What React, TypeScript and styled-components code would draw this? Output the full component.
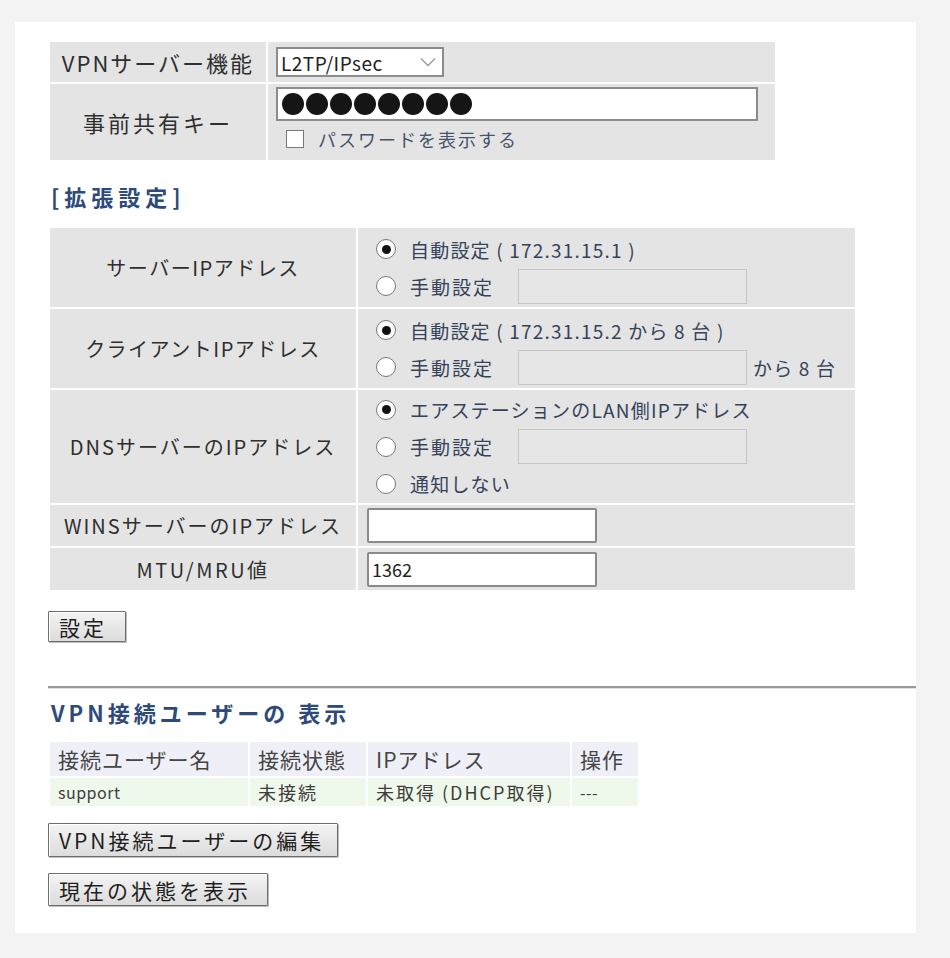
import React from "react";
import styled, { createGlobalStyle } from "styled-components";

const Global = createGlobalStyle`
  html, body { margin: 0; padding: 0; background: #f3f3f3; }
  body { font-family: "Noto Sans CJK JP", "Noto Sans", sans-serif; color: #333; }
  * { box-sizing: border-box; }
`;

const Panel = styled.div`
  margin: 22px 0 25px 15px;
  width: 901px;
  background: #fff;
  padding: 18px 0 27px 33px;
  display: flex;
  flex-direction: column;
  align-items: flex-start;
`;

const FormTable = styled.table<{ $w: number; $mt?: number }>`
  border-collapse: separate;
  border-spacing: 2px;
  table-layout: fixed;
  width: ${(p) => p.$w}px;
  margin-top: ${(p) => p.$mt ?? 0}px;
`;

const Col = styled.col<{ $w: number }>`
  width: ${(p) => p.$w}px;
`;

const LabelCell = styled.td<{ $h: number; $size?: number; $ls?: number }>`
  height: ${(p) => p.$h}px;
  padding: 0;
  background: #e4e4e4;
  text-align: center;
  vertical-align: middle;
  font-size: ${(p) => p.$size ?? 20}px;
  font-weight: 400;
  letter-spacing: ${(p) => p.$ls ?? 1.5}px;
  color: #2f2f2f;
  white-space: nowrap;
`;

const ValueCell = styled.td<{ $h: number; $pl?: number }>`
  height: ${(p) => p.$h}px;
  padding: 0 0 0 ${(p) => p.$pl ?? 8}px;
  background: #e4e4e4;
  vertical-align: middle;
`;

const Stack = styled.div<{ $gap?: number }>`
  display: flex;
  flex-direction: column;
  gap: ${(p) => p.$gap ?? 0}px;
`;

const SelectBox = styled.div`
  width: 168px;
  height: 30px;
  background: #fff;
  border: 2px solid #8c8c8c;
  display: flex;
  align-items: center;
  justify-content: space-between;
  padding: 0 6px 0 3px;
  font-size: 19px;
  letter-spacing: 0.5px;
  color: #222;
`;

const PasswordBox = styled.div`
  width: 482px;
  height: 34px;
  background: #fff;
  border: 2px solid #8c8c8c;
  display: flex;
  align-items: center;
  gap: 2px;
  padding-left: 4px;
`;

const Dot = styled.span`
  width: 22px;
  height: 22px;
  border-radius: 50%;
  background: #151515;
`;

const CheckLine = styled.label`
  display: flex;
  align-items: center;
  gap: 14px;
  height: 36px;
  padding-left: 10px;
  font-size: 18px;
  letter-spacing: 2px;
  color: #44536a;
`;

const CheckBox = styled.span`
  width: 18px;
  height: 18px;
  background: #fff;
  border: 1px solid #777;
`;

const Heading = styled.h2<{ $mt: number; $ls?: number }>`
  margin: ${(p) => p.$mt}px 0 0 3px;
  font-size: 22px;
  line-height: 26px;
  font-weight: 700;
  letter-spacing: ${(p) => p.$ls ?? 4}px;
  color: #2d4a7a;
`;

const OptionLine = styled.div`
  display: flex;
  align-items: center;
  height: 37px;
  font-size: 19px;
  font-weight: 400;
  letter-spacing: 1.2px;
  color: #35435a;
  white-space: nowrap;
`;

const Radio = styled.span<{ $on?: boolean }>`
  width: 20px;
  height: 20px;
  border-radius: 50%;
  border: 1px solid #7a7a7a;
  background: radial-gradient(circle, #fff 60%, #eee 100%);
  margin-right: 14px;
  display: flex;
  align-items: center;
  justify-content: center;
  &::after {
    content: "";
    width: 9px;
    height: 9px;
    border-radius: 50%;
    background: ${(p) => (p.$on ? "#111" : "transparent")};
  }
`;

const OptionText = styled.span<{ $w?: number }>`
  display: inline-block;
  width: ${(p) => (p.$w ? `${p.$w}px` : "auto")};
  letter-spacing: 2px;
`;

const DisabledInput = styled.div`
  width: 229px;
  height: 35px;
  background: #e6e6e6;
  border: 1px solid #c6c6c6;
`;

const TextInput = styled.div`
  width: 230px;
  height: 35px;
  background: #fff;
  border: 2px solid #8a8a8a;
  border-radius: 2px;
  font-size: 18px;
  color: #222;
  display: flex;
  align-items: center;
  padding-left: 3px;
`;

const Suffix = styled.span`
  margin-left: 6px;
`;

const Button = styled.button<{ $w: number; $h: number; $mt: number }>`
  width: ${(p) => p.$w}px;
  height: ${(p) => p.$h}px;
  margin-top: ${(p) => p.$mt}px;
  padding: 0 0 0 10px;
  text-align: left;
  font-family: "Noto Sans CJK JP", "Noto Sans", sans-serif;
  font-size: 21px;
  font-weight: 400;
  letter-spacing: 3px;
  color: #1f1f1f;
  background: linear-gradient(#f4f4f4, #dcdcdc);
  border: 1px solid #6e6e6e;
  box-shadow: inset 1px 1px 0 #fff, 1px 1px 0 #bdbdbd;
  border-radius: 1px;
`;

const Rule = styled.hr`
  align-self: stretch;
  margin: 44px 0 0 0;
  border: 0;
  border-top: 2px solid #9a9a9a;
  border-bottom: 1px solid #e2e2e2;
`;

const HeadCell = styled.td`
  height: 34px;
  padding: 0 0 0 8px;
  background: #eff0f7;
  font-size: 21px;
  letter-spacing: 1px;
  color: #454545;
  white-space: nowrap;
  vertical-align: middle;
`;

const DataCell = styled.td<{ $latin?: boolean }>`
  height: 28px;
  padding: 0 0 0 8px;
  background: #eef8eb;
  font-size: ${(p) => (p.$latin ? 16 : 18)}px;
  letter-spacing: ${(p) => (p.$latin ? 0.5 : 2)}px;
  color: #3d3d3d;
  white-space: nowrap;
  vertical-align: middle;
`;

const Chevron = () => (
  <svg width="16" height="10" viewBox="0 0 16 10" fill="none">
    <path d="M1 1.5 L8 8.5 L15 1.5" stroke="#9a9a9a" strokeWidth="1.3" />
  </svg>
);

export default function App() {
  return (
    <>
      <Global />
      <Panel>
        <FormTable $w={729}>
          <colgroup>
            <Col $w={216} />
            <Col $w={507} />
          </colgroup>
          <tbody>
            <tr>
              <LabelCell $h={40} $size={22} $ls={2}>VPNサーバー機能</LabelCell>
              <ValueCell $h={40}>
                <SelectBox>
                  <span>L2TP/IPsec</span>
                  <Chevron />
                </SelectBox>
              </ValueCell>
            </tr>
            <tr>
              <LabelCell $h={76} $size={22} $ls={3}>事前共有キー</LabelCell>
              <ValueCell $h={76}>
                <Stack>
                  <PasswordBox>
                    {Array.from({ length: 8 }).map((_, i) => (
                      <Dot key={i} />
                    ))}
                  </PasswordBox>
                  <CheckLine>
                    <CheckBox />
                    パスワードを表示する
                  </CheckLine>
                </Stack>
              </ValueCell>
            </tr>
          </tbody>
        </FormTable>

        <Heading $mt={21} $ls={5}>[拡張設定]</Heading>

        <FormTable $w={809} $mt={17}>
          <colgroup>
            <Col $w={306} />
            <Col $w={497} />
          </colgroup>
          <tbody>
            <tr>
              <LabelCell $h={79}>サーバーIPアドレス</LabelCell>
              <ValueCell $h={79} $pl={18}>
                <Stack>
                  <OptionLine>
                    <Radio $on />
                    自動設定 ( 172.31.15.1 )
                  </OptionLine>
                  <OptionLine>
                    <Radio />
                    <OptionText $w={108}>手動設定</OptionText>
                    <DisabledInput />
                  </OptionLine>
                </Stack>
              </ValueCell>
            </tr>
            <tr>
              <LabelCell $h={79}>クライアントIPアドレス</LabelCell>
              <ValueCell $h={79} $pl={18}>
                <Stack>
                  <OptionLine>
                    <Radio $on />
                    自動設定 ( 172.31.15.2 から 8 台 )
                  </OptionLine>
                  <OptionLine>
                    <Radio />
                    <OptionText $w={108}>手動設定</OptionText>
                    <DisabledInput />
                    <Suffix>から 8 台</Suffix>
                  </OptionLine>
                </Stack>
              </ValueCell>
            </tr>
            <tr>
              <LabelCell $h={113} $ls={2}>DNSサーバーのIPアドレス</LabelCell>
              <ValueCell $h={113} $pl={18}>
                <Stack>
                  <OptionLine>
                    <Radio $on />
                    エアステーションのLAN側IPアドレス
                  </OptionLine>
                  <OptionLine>
                    <Radio />
                    <OptionText $w={108}>手動設定</OptionText>
                    <DisabledInput />
                  </OptionLine>
                  <OptionLine>
                    <Radio />
                    通知しない
                  </OptionLine>
                </Stack>
              </ValueCell>
            </tr>
            <tr>
              <LabelCell $h={41} $ls={2}>WINSサーバーのIPアドレス</LabelCell>
              <ValueCell $h={41} $pl={9}>
                <TextInput />
              </ValueCell>
            </tr>
            <tr>
              <LabelCell $h={42} $ls={2.5}>MTU/MRU値</LabelCell>
              <ValueCell $h={42} $pl={9}>
                <TextInput>1362</TextInput>
              </ValueCell>
            </tr>
          </tbody>
        </FormTable>

        <Button $w={78} $h={31} $mt={19}>設定</Button>

        <Rule />

        <Heading $mt={10}>VPN接続ユーザーの 表示</Heading>

        <FormTable $w={592} $mt={15}>
          <colgroup>
            <Col $w={198} />
            <Col $w={116} />
            <Col $w={202} />
            <Col $w={66} />
          </colgroup>
          <tbody>
            <tr>
              <HeadCell>接続ユーザー名</HeadCell>
              <HeadCell>接続状態</HeadCell>
              <HeadCell>IPアドレス</HeadCell>
              <HeadCell>操作</HeadCell>
            </tr>
            <tr>
              <DataCell $latin>support</DataCell>
              <DataCell>未接続</DataCell>
              <DataCell>未取得 (DHCP取得)</DataCell>
              <DataCell $latin>---</DataCell>
            </tr>
          </tbody>
        </FormTable>

        <Button $w={290} $h={34} $mt={15}>VPN接続ユーザーの編集</Button>
        <Button $w={220} $h={33} $mt={16}>現在の状態を表示</Button>
      </Panel>
    </>
  );
}
